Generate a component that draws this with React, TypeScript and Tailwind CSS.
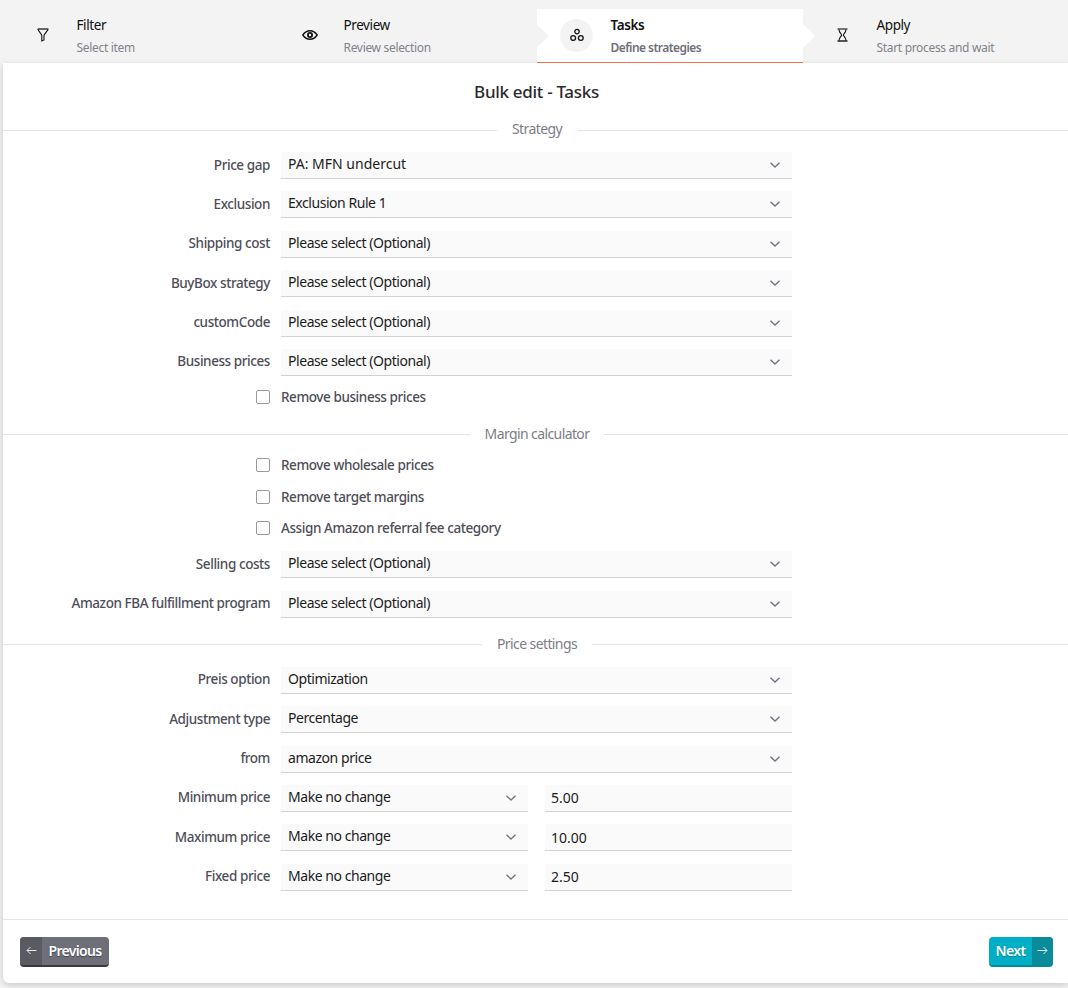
import React from "react";

const FONT = "[font-family:'Noto_Sans','Liberation_Sans',sans-serif]";

function Chevron() {
  return (
    <svg width="10" height="6" viewBox="0 0 10 6" fill="none" stroke="#6b7280" strokeWidth="1.3" className="shrink-0">
      <path d="M0.5 0.8 L5 5 L9.5 0.8" />
    </svg>
  );
}

function FilterIcon() {
  return (
    <svg width="12" height="14" viewBox="0 0 12 14" fill="none" stroke="#111" strokeWidth="1.1">
      <path d="M0.6 1 H11.4" strokeWidth="1.6" stroke="#444" />
      <path d="M0.8 1.4 L4.8 7.2 V13 L7 12 V7.2 L11.2 1.4" />
    </svg>
  );
}
function EyeIcon() {
  return (
    <svg width="16" height="10" viewBox="0 0 16 10" fill="none" stroke="#111" strokeWidth="1.4">
      <path d="M0.8 5 C3 1.8 5.4 0.8 8 0.8 C10.6 0.8 13 1.8 15.2 5 C13 8.2 10.6 9.2 8 9.2 C5.4 9.2 3 8.2 0.8 5 Z" />
      <circle cx="8" cy="5" r="2.1" fill="#fff" strokeWidth="1.8" />
    </svg>
  );
}
function TasksIcon() {
  return (
    <svg width="14" height="14" viewBox="0 0 14 14" fill="none" stroke="#111" strokeWidth="1.3">
      <circle cx="7" cy="3.6" r="2.2" />
      <circle cx="3.2" cy="10" r="2.4" />
      <circle cx="10.8" cy="10" r="2.4" />
    </svg>
  );
}
function HourglassIcon() {
  return (
    <svg width="11" height="14" viewBox="0 0 11 14" fill="none" stroke="#111" strokeWidth="1.1">
      <path d="M0.5 1 H10.5" strokeWidth="1.6" stroke="#555" />
      <path d="M0.5 13 H10.5" strokeWidth="1.4" />
      <path d="M2 1.5 C2 4.5 4.6 5.6 4.6 7 C4.6 8.4 2 9.5 2 12.5 M9 1.5 C9 4.5 6.4 5.6 6.4 7 C6.4 8.4 9 9.5 9 12.5" />
    </svg>
  );
}

function Step({
  icon,
  title,
  sub,
  active,
  className,
}: {
  icon: React.ReactNode;
  title: string;
  sub: string;
  active?: boolean;
  className: string;
}) {
  return (
    <div className={`relative flex h-[54px] items-start ${active ? "border-b border-[#ff6b47] bg-white" : ""} ${className}`}>
      {active && (
        <>
          <div className="absolute left-0 top-[16px] h-[22px] w-[12px] bg-[#f3f3f3] [clip-path:polygon(0_0,100%_50%,0_100%)]" />
          <div className="absolute left-full top-[15px] z-10 h-[24px] w-[12px] bg-white [clip-path:polygon(0_0,100%_50%,0_100%)]" />
        </>
      )}
      <div className="flex h-[52px] w-[73.5px] shrink-0 items-center justify-center pl-[6px]">
        <div className={`flex size-[33px] items-center justify-center rounded-full ${active ? "bg-[#f3f3f3]" : ""}`}>{icon}</div>
      </div>
      <div className="flex flex-col pt-[6px]">
        <div className={`text-[13.5px] leading-[20px] tracking-[-0.4px] text-[#111] ${active ? "font-semibold" : ""}`}>{title}</div>
        <div
          className={`mt-[4px] text-[12px] leading-[18px] ${
            active ? "font-semibold tracking-[-0.55px] text-[#6f6f7a]" : "tracking-[-0.32px] text-[#82828c]"
          }`}
        >
          {sub}
        </div>
      </div>
    </div>
  );
}

function Legend({ children }: { children: string }) {
  return (
    <div className="flex h-[20px] items-center">
      <div className="h-px grow basis-[3px] bg-[#e4e4e4]" />
      <div className="-mt-[2px] px-[15px] text-[14px] leading-[20px] tracking-[-0.6px] text-[#7d7d86]">{children}</div>
      <div className="h-px grow basis-0 bg-[#e4e4e4]" />
    </div>
  );
}

function Select({ value, className, wide }: { value: string; className?: string; wide?: boolean }) {
  return (
    <div
      className={`flex h-[27px] items-center justify-between rounded-t-[2px] border-b border-[#d2d2d2] bg-[#fafafa] pl-[7px] pr-[12px] text-[14px] leading-[20px] text-[#1c1c1c] ${
        wide ? "tracking-[0px]" : "tracking-[-0.45px]"
      } ${className ?? "flex-1"}`}
    >
      <span className="-mt-[2px]">{value}</span>
      <Chevron />
    </div>
  );
}

function Label({ children }: { children: string }) {
  return (
    <div className="-mt-[2px] w-[267px] shrink-0 text-right text-[13.5px] font-medium leading-[20px] tracking-[-0.42px] text-[#4e4e58]">
      {children}
    </div>
  );
}

function Row({ label, value, wide }: { label: string; value: string; wide?: boolean }) {
  return (
    <div className="flex items-center gap-[11px] pr-[276px]">
      <Label>{label}</Label>
      <Select value={value} wide={wide} />
    </div>
  );
}

function PriceRow({ label, value, amount }: { label: string; value: string; amount: string }) {
  return (
    <div className="flex items-center gap-[11px] pr-[276px]">
      <Label>{label}</Label>
      <Select value={value} className="w-[247px] shrink-0" />
      <input
        readOnly
        value={amount}
        className="ml-[6px] h-[27px] min-w-0 flex-1 rounded-t-[2px] border-b border-[#d2d2d2] bg-[#fafafa] px-[6px] text-[14px] leading-[20px] text-[#1c1c1c] outline-none"
      />
    </div>
  );
}

function Check({ label }: { label: string }) {
  return (
    <div className="flex h-[20px] items-center pl-[253px]">
      <span className="size-[14px] rounded-[2px] border border-[#9a9a9a] bg-white" />
      <span className="ml-[11px] text-[13.5px] font-medium leading-[20px] tracking-[-0.42px] text-[#4e4e58]">{label}</span>
    </div>
  );
}

export default function App() {
  return (
    <div className={`h-[988px] w-[1068px] overflow-hidden bg-[#f3f3f3] ${FONT}`}>
      <div className="flex pl-[3px] pt-[9px]">
        <Step className="w-[267px]" icon={<FilterIcon />} title="Filter" sub="Select item" />
        <Step className="w-[267px]" icon={<EyeIcon />} title="Preview" sub="Review selection" />
        <Step className="w-[266px]" icon={<TasksIcon />} title="Tasks" sub="Define strategies" active />
        <Step className="flex-1" icon={<HourglassIcon />} title="Apply" sub="Start process and wait" />
      </div>
      <div className="ml-[3px] h-[920px] rounded-bl-[6px] bg-white shadow-[0_2px_6px_rgba(0,0,0,0.18)]">
        <h1 className="pl-[2px] pt-[17px] text-center text-[17px] font-medium leading-[24px] tracking-[-0.3px] text-[#2a2a2e]">
          Bulk edit - Tasks
        </h1>
        <div className="mt-[16px]">
          <Legend>Strategy</Legend>
        </div>
        <div className="mt-[12px] flex flex-col gap-[12.4px]">
          <Row label="Price gap" value="PA: MFN undercut" wide />
          <Row label="Exclusion" value="Exclusion Rule 1" />
          <Row label="Shipping cost" value="Please select (Optional)" />
          <Row label="BuyBox strategy" value="Please select (Optional)" />
          <Row label="customCode" value="Please select (Optional)" />
          <Row label="Business prices" value="Please select (Optional)" />
        </div>
        <div className="mt-[11px]">
          <Check label="Remove business prices" />
        </div>
        <div className="mt-[18px]">
          <Legend>Margin calculator</Legend>
        </div>
        <div className="mt-[10.4px] flex flex-col gap-[11.5px]">
          <Check label="Remove wholesale prices" />
          <Check label="Remove target margins" />
          <Check label="Assign Amazon referral fee category" />
        </div>
        <div className="mt-[13px] flex flex-col gap-[12.4px]">
          <Row label="Selling costs" value="Please select (Optional)" />
          <Row label="Amazon FBA fulfillment program" value="Please select (Optional)" />
        </div>
        <div className="mt-[17px]">
          <Legend>Price settings</Legend>
        </div>
        <div className="mt-[12px] flex flex-col gap-[12.4px]">
          <Row label="Preis option" value="Optimization" />
          <Row label="Adjustment type" value="Percentage" />
          <Row label="from" value="amazon price" />
          <PriceRow label="Minimum price" value="Make no change" amount="5.00" />
          <PriceRow label="Maximum price" value="Make no change" amount="10.00" />
          <PriceRow label="Fixed price" value="Make no change" amount="2.50" />
        </div>
        <div className="mt-[28px] flex items-center justify-between border-t border-[#e4e4e4] pb-[16px] pl-[17px] pr-[15px] pt-[17px]">
          <button className="flex h-[30px] w-[89px] overflow-hidden rounded-[4px] border-b-2 border-[#38383e] bg-[#6f6f7a] text-[14px] font-semibold tracking-[-0.7px] text-white [text-shadow:0_1px_1px_rgba(0,0,0,0.4)]">
            <span className="flex h-full w-[22px] items-center justify-center bg-[#5a5a62]">
              <svg width="11" height="9" viewBox="0 0 11 9" fill="none" stroke="#e6e6e6" strokeWidth="1">
                <path d="M10.5 4.5 H1 M4.5 1 L1 4.5 L4.5 8" />
              </svg>
            </span>
            <span className="-ml-[1px] flex h-full flex-1 items-center justify-center">Previous</span>
          </button>
          <button className="flex h-[30px] w-[64px] overflow-hidden rounded-[4px] border-b-2 border-[#008c9c] bg-[#00afc5] text-[14px] font-semibold tracking-[-0.6px] text-white [text-shadow:0_1px_1px_rgba(0,0,0,0.25)]">
            <span className="flex h-full flex-1 items-center justify-center">Next</span>
            <span className="flex h-full w-[21px] items-center justify-center bg-[#0b8a99]">
              <svg width="11" height="9" viewBox="0 0 11 9" fill="none" stroke="#e6e6e6" strokeWidth="1">
                <path d="M0.5 4.5 H10 M6.5 1 L10 4.5 L6.5 8" />
              </svg>
            </span>
          </button>
        </div>
      </div>
    </div>
  );
}
